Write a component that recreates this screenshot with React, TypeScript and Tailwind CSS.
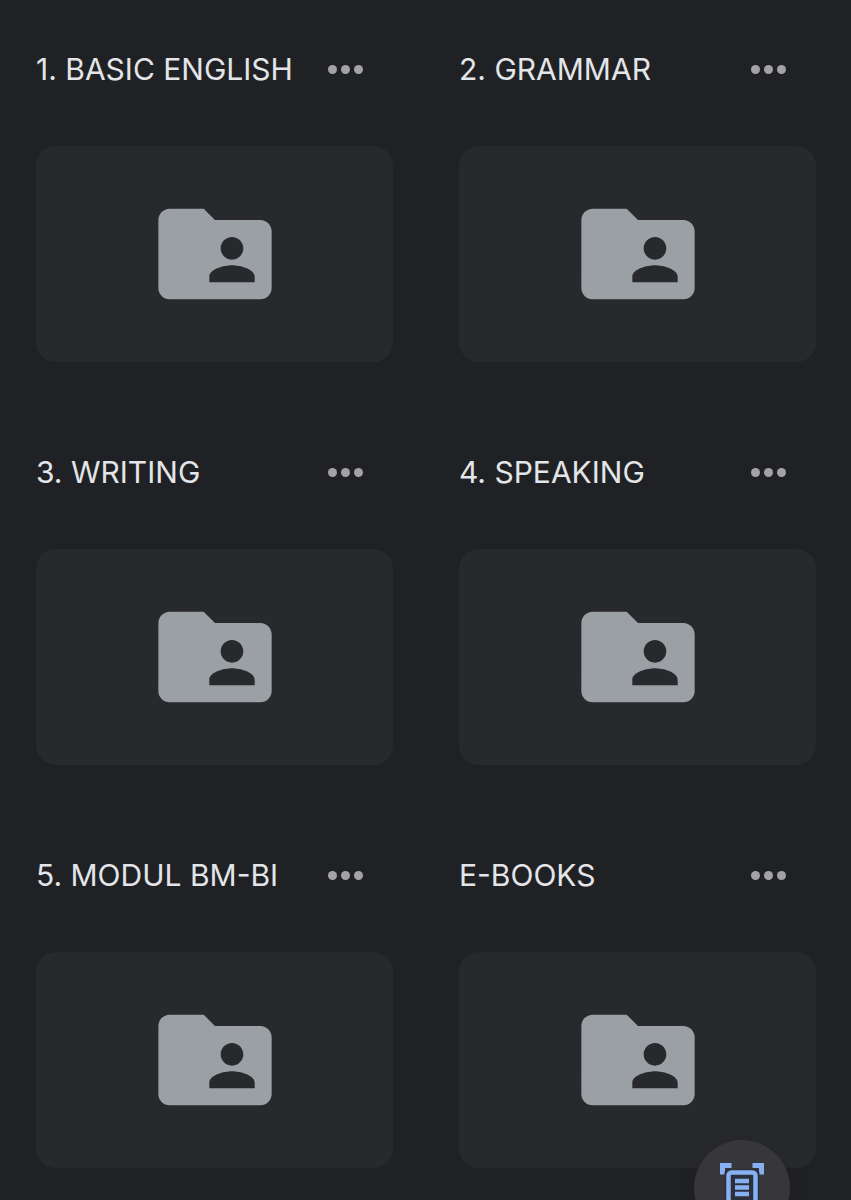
import { MdFolderShared } from 'react-icons/md';

const folders = [
  '1. BASIC ENGLISH',
  '2. GRAMMAR',
  '3. WRITING',
  '4. SPEAKING',
  '5. MODUL BM-BI',
  'E-BOOKS',
];

function FolderCard({ name }: { name: string }) {
  return (
    <article>
      <div className="mb-[47px] flex h-[60px] items-center justify-between pr-[30px]">
        <h2 className="truncate text-[30px] leading-[40px] text-[#e3e5e8]">{name}</h2>
        <button
          type="button"
          aria-label={`More options for ${name}`}
          className="flex shrink-0 items-center gap-1 py-4"
        >
          <span className="size-[9px] rounded-full bg-[#a3a3a7]" />
          <span className="size-[9px] rounded-full bg-[#a3a3a7]" />
          <span className="size-[9px] rounded-full bg-[#a3a3a7]" />
        </button>
      </div>
      <button
        type="button"
        aria-label={`Open ${name}`}
        className="flex h-[216px] w-full items-center justify-center rounded-[20px] bg-[#28292c]"
      >
        <MdFolderShared className="size-[136px] text-[#9aa0a4]" />
      </button>
    </article>
  );
}

function ScanIcon() {
  return (
    <svg width="44" height="50" viewBox="0 0 44 50" fill="none" aria-hidden="true">
      {/* Corner brackets */}
      <path
        d="M2.5 11.5V2.5H11.5M32.5 2.5h9V11.5M41.5 38.5v9h-9M11.5 47.5h-9v-9"
        stroke="#86b0f0"
        strokeWidth="5"
      />
      {/* Page */}
      <rect x="4.5" y="5.5" width="35" height="39" rx="5" fill="#2b303b" />
      <rect x="8.5" y="9.5" width="27" height="31" rx="3" stroke="#86b0f0" strokeWidth="4.5" />
      <path d="M15 18h14M15 24.5h14M15 31h14" stroke="#86b0f0" strokeWidth="4.5" />
    </svg>
  );
}

export default function App() {
  return (
    <div className="min-h-screen bg-[#202124] font-['Inter','Liberation_Sans',sans-serif]">
      <main className="grid grid-cols-2 gap-x-[66px] gap-y-20 pt-[39px] pr-[35px] pb-8 pl-9">
        {folders.map((name) => (
          <FolderCard key={name} name={name} />
        ))}
      </main>

      <button
        type="button"
        aria-label="Scan document"
        className="fixed right-[61px] -bottom-9 flex size-24 items-center justify-center rounded-full bg-[#37373b] shadow-[0_2px_16px_rgba(0,0,0,0.15)]"
      >
        <ScanIcon />
      </button>
    </div>
  );
}
